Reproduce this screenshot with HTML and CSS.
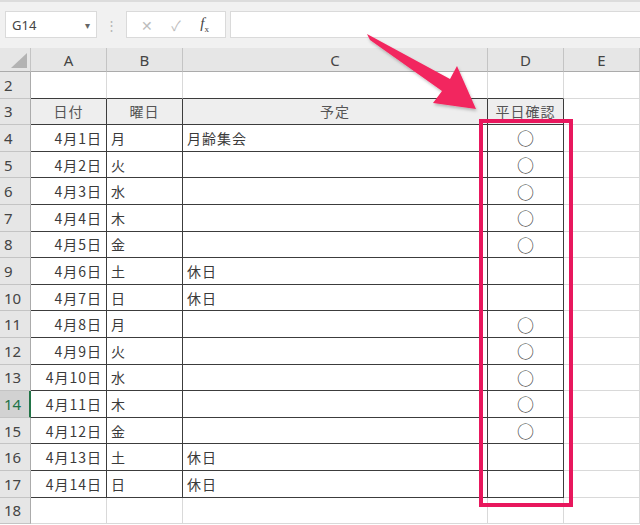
FILE: index.html
```html
<!DOCTYPE html>
<html lang="ja">
<head>
    <meta charset="UTF-8">
    <title>平日確認</title>
    <link rel="stylesheet" href="styles.css">
</head>
<body>
    <div class="toolbar">
        <div class="name-box">
            <span>G14</span>
            <span class="drop">&#9662;</span>
        </div>
        <div class="dots">&#8942;</div>
        <div class="fx-box">
            <span class="fx-btn">&#10005;</span>
            <span class="fx-btn">&#10003;</span>
            <span class="fx-btn fx"><i>f</i><sub>x</sub></span>
        </div>
        <div class="formula"></div>
    </div>

    <div class="sheet" id="sheet"></div>

    <!-- annotation -->
    <svg class="overlay" width="640" height="525" viewBox="0 0 640 525">
        <defs>
            <filter id="shadow" x="-10%" y="-10%" width="130%" height="130%">
                <feDropShadow dx="1" dy="2" stdDeviation="1.5" flood-color="#000" flood-opacity="0.25"/>
            </filter>
        </defs>
        <rect x="481" y="121" width="90" height="384" fill="none" stroke="#e8175d" stroke-width="4"/>
        <polygon filter="url(#shadow)" fill="#f2285f"
                 points="367,34 450,79 457,66 476,109 433,103 442,91 370,40"/>
    </svg>

    <script>
        const sheet = document.getElementById('sheet');
        const cols = ['A', 'B', 'C', 'D', 'E'];
        const days = ['月', '火', '水', '木', '金', '土', '日'];

        let html = '<div class="corner"><span></span></div>';
        cols.forEach(c => { html += `<div class="col-head">${c}</div>`; });

        // row 2 (empty, bottom border of table)
        html += '<div class="row-head">2</div>';
        for (let i = 0; i < 4; i++) html += '<div class="cell bb"></div>';
        html += '<div class="cell"></div>';

        // row 3 (titles)
        html += '<div class="row-head">3</div>';
        html += '<div class="cell b title center">日付</div>';
        html += '<div class="cell b title center">曜日</div>';
        html += '<div class="cell b title center">予定</div>';
        html += '<div class="cell b title center">平日確認</div>';
        html += '<div class="cell"></div>';

        for (let d = 1; d <= 14; d++) {
            const row = d + 3;
            const day = days[(d - 1) % 7];
            const weekend = day === '土' || day === '日';
            let memo = '';
            if (d === 1) memo = '月齢集会';
            if (weekend) memo = '休日';
            html += `<div class="row-head ${row === 14 ? 'active' : ''}">${row}</div>`;
            html += `<div class="cell b right">4月${d}日</div>`;
            html += `<div class="cell b">${day}</div>`;
            html += `<div class="cell b">${memo}</div>`;
            html += `<div class="cell b center">${weekend ? '' : '<span class="mark">○</span>'}</div>`;
            html += '<div class="cell"></div>';
        }

        html += '<div class="row-head">18</div>';
        for (let i = 0; i < 5; i++) html += '<div class="cell"></div>';

        sheet.innerHTML = html;
    </script>
</body>
</html>
```

FILE: styles.css
```css
* {
    margin: 0;
    padding: 0;
    box-sizing: border-box;
}

body {
    width: 640px;
    height: 525px;
    overflow: hidden;
    position: relative;
    background: #fff;
    font-family: "Noto Sans CJK JP", "Noto Sans", sans-serif;
    color: #333;
}

/* Formula bar */
.toolbar {
    height: 48px;
    background: #f1f1f1;
    border-top: 2px solid #dcdcdc;
    display: flex;
    align-items: flex-start;
    padding: 9px 0 0 5px;
}

.name-box {
    width: 92px;
    height: 27px;
    background: #fff;
    border: 1px solid #dadada;
    display: flex;
    align-items: center;
    justify-content: space-between;
    padding: 0 6px 0 6px;
    font-family: "Noto Sans", sans-serif;
    font-size: 13px;
    color: #444;
}

.name-box .drop {
    font-size: 10px;
    color: #666;
}

.dots {
    width: 29px;
    text-align: center;
    color: #b5b5b5;
    font-size: 13px;
    line-height: 27px;
}

.fx-box {
    width: 100px;
    height: 27px;
    background: #fff;
    border: 1px solid #dadada;
    display: flex;
    align-items: center;
    justify-content: space-around;
    padding: 0 6px;
}

.fx-btn {
    color: #bdbdbd;
    font-size: 14px;
    width: 24px;
    text-align: center;
}

.fx-btn.fx {
    color: #444;
    font-family: "Liberation Serif", serif;
    font-size: 15px;
}

.fx-btn.fx sub {
    font-size: 9px;
}

.formula {
    flex: 1;
    height: 27px;
    margin-left: 4px;
    background: #fff;
    border: 1px solid #dadada;
    border-right: none;
}

/* Sheet grid */
.sheet {
    display: grid;
    grid-template-columns: 31px 76px 76px 305px 76px 76px;
    grid-template-rows: 24px;
    grid-auto-rows: 26.6px;
    font-size: 14px;
    letter-spacing: 1px;
}

.corner {
    background: #e6e6e6;
    border-right: 1px solid #c4c4c4;
    border-bottom: 1px solid #ababab;
    position: relative;
}

.corner span {
    position: absolute;
    right: 3px;
    bottom: 3px;
    width: 0;
    height: 0;
    border-left: 16px solid transparent;
    border-bottom: 15px solid #b3b3b3;
}

.col-head {
    background: #e6e6e6;
    border-right: 1px solid #c4c4c4;
    border-bottom: 1px solid #ababab;
    font-family: "Noto Sans", sans-serif;
    font-size: 15px;
    color: #444;
    letter-spacing: 0;
    display: flex;
    align-items: center;
    justify-content: center;
}

.row-head {
    background: #e6e6e6;
    border-right: 1px solid #ababab;
    border-bottom: 1px solid #c4c4c4;
    font-family: "Noto Sans", sans-serif;
    font-size: 15px;
    color: #444;
    letter-spacing: 0;
    display: flex;
    align-items: center;
    padding-left: 4px;
}

.row-head.active {
    background: #d2d2d2;
    color: #217346;
    border-right: 2px solid #217346;
}

.cell {
    border-right: 1px solid #d9d9d9;
    border-bottom: 1px solid #d9d9d9;
    display: flex;
    align-items: center;
    padding: 0 4px;
    white-space: nowrap;
    color: #3a3a3a;
}

.cell.b {
    border-right-color: #3c3c3c;
    border-bottom-color: #3c3c3c;
}

.cell.bb {
    border-bottom-color: #3c3c3c;
}

.cell.title {
    background: #eeeeee;
    color: #555;
}

.mark {
    font-size: 17px;
    line-height: 1;
    color: #444;
    letter-spacing: 0;
}

.center {
    justify-content: center;
}

.right {
    justify-content: flex-end;
}

.overlay {
    position: absolute;
    left: 0;
    top: 0;
    pointer-events: none;
}
```
